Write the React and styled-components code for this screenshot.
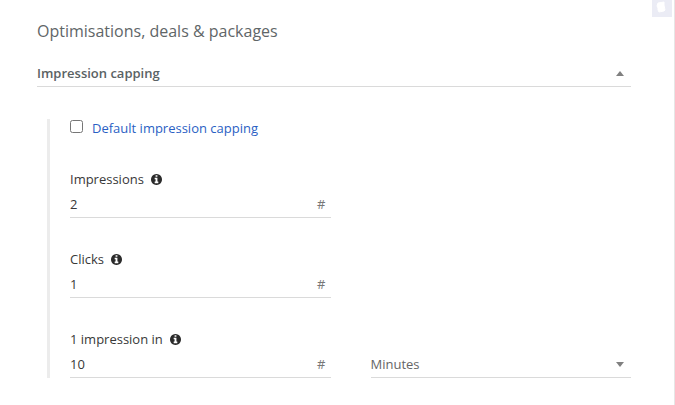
import React, { useState } from "react";
import styled, { createGlobalStyle } from "styled-components";

const GlobalStyle = createGlobalStyle`
  *, *::before, *::after { box-sizing: border-box; }
  body {
    margin: 0;
    background: #fff;
    color: #383838;
    font-family: "Open Sans", sans-serif;
    font-size: 13px;
    line-height: 18px;
  }
  button, input, select { font: inherit; color: inherit; }
`;

const Page = styled.main`
  position: relative;
  min-height: 100vh;
  padding: 19px 43px 27px 37px;
  border-right: 1px solid #e6e6e6;
`;

const PanelToggle = styled.button`
  position: absolute;
  top: 0;
  right: 2px;
  display: flex;
  justify-content: center;
  width: 20px;
  height: 17px;
  padding: 1px 2px 0 0;
  border: 0;
  background: #ebecf5;
`;

const Title = styled.h1`
  margin: 0 0 21px;
  color: #5f6668;
  font-size: 16px;
  font-weight: 400;
  line-height: 24px;
`;

const SectionHeader = styled.button`
  display: flex;
  align-items: center;
  justify-content: space-between;
  width: 100%;
  height: 23px;
  padding: 0 7px 4px 0;
  border: 0;
  border-bottom: 1px solid #dadada;
  background: none;
  color: #5a6264;
  font-weight: 600;
  cursor: pointer;
`;

const SectionBody = styled.div`
  display: grid;
  gap: 32px;
  margin: 32px 0 0 10px;
  padding-left: 20px;
  border-left: 3px solid #ececec;
`;

const CheckRow = styled.div`
  display: flex;
  align-items: flex-start;
  gap: 9px;
  height: 19px;
`;

const Checkbox = styled.input`
  width: 13px;
  height: 13px;
  margin: 1px 0 0;
`;

const CheckLabel = styled.label`
  color: #2a5fc4;
`;

const FieldRow = styled.div`
  display: grid;
  grid-template-columns: 1fr 1fr;
  align-items: end;
  gap: 40px;
`;

const FieldLabel = styled.label`
  display: flex;
  align-items: center;
  gap: 7px;
  padding-bottom: 2px;
`;

const InfoIcon = styled.svg`
  width: 11px;
  height: 11px;
  fill: #2b2b2b;
`;

const Control = styled.div`
  display: flex;
  align-items: center;
  height: 28px;
  border-bottom: 1px solid #dadada;
`;

const NumberInput = styled.input`
  flex: 1;
  min-width: 0;
  height: 27px;
  padding: 0;
  border: 0;
  outline: 0;
  background: none;
`;

const Unit = styled.span`
  padding-right: 5px;
  color: #777;
`;

const Select = styled.select`
  flex: 1;
  height: 27px;
  padding: 0;
  border: 0;
  outline: 0;
  appearance: none;
  background: none;
  color: #666;
`;

const Arrow = styled.svg`
  width: 8px;
  height: 5px;
  flex: none;
  fill: #808080;
  pointer-events: none;
`;

const SelectControl = styled(Control)`
  padding-right: 7px;

  ${Arrow} { margin-top: 2px; }
`;

function NumberField({ id, label, initial }) {
  const [value, setValue] = useState(initial);
  return (
    <div>
      <FieldLabel htmlFor={id}>
        {label}
        <InfoIcon viewBox="128 128 1536 1536" aria-hidden="true">
          <path d="M1152 1376v-160q0-14-9-23t-23-9h-96v-512q0-14-9-23t-23-9h-320q-14 0-23 9t-9 23v160q0 14 9 23t23 9h96v320h-96q-14 0-23 9t-9 23v160q0 14 9 23t23 9h448q14 0 23-9t9-23zm-128-896v-160q0-14-9-23t-23-9h-192q-14 0-23 9t-9 23v160q0 14 9 23t23 9h192q14 0 23-9t9-23zm640 416q0 209-103 385.5t-279.5 279.5-385.5 103-385.5-103-279.5-279.5-103-385.5 103-385.5 279.5-279.5 385.5-103 385.5 103 279.5 279.5 103 385.5z" />
        </InfoIcon>
      </FieldLabel>
      <Control>
        <NumberInput id={id} inputMode="numeric" value={value} onChange={(e) => setValue(e.target.value)} />
        <Unit>#</Unit>
      </Control>
    </div>
  );
}

export default function App() {
  const [open, setOpen] = useState(true);
  return (
    <>
      <GlobalStyle />
      <Page>
        <PanelToggle type="button" aria-label="Notes">
          <svg width="10" height="12" viewBox="0 0 10 12" aria-hidden="true">
            <path d="M2 2 L8 1 L8 4 L9 9 L8 10 L3 11 L2 9 L2 7 L1 5 Z" fill="#fff" stroke="#fff" strokeLinejoin="round" />
          </svg>
        </PanelToggle>
        <Title>Optimisations, deals &amp; packages</Title>
        <SectionHeader type="button" aria-expanded={open} onClick={() => setOpen(!open)}>
          Impression capping
          <Arrow viewBox="0 0 8 5" aria-hidden="true">
            <path d={open ? "M0 5 L4 0 L8 5 Z" : "M0 0 H8 L4 5 Z"} />
          </Arrow>
        </SectionHeader>
        {open && (
          <SectionBody>
            <CheckRow>
              <Checkbox type="checkbox" id="default-capping" />
              <CheckLabel htmlFor="default-capping">Default impression capping</CheckLabel>
            </CheckRow>
            <FieldRow>
              <NumberField id="impressions" label="Impressions" initial="2" />
            </FieldRow>
            <FieldRow>
              <NumberField id="clicks" label="Clicks" initial="1" />
            </FieldRow>
            <FieldRow>
              <NumberField id="period" label="1 impression in" initial="10" />
              <SelectControl>
                <Select aria-label="Time unit" defaultValue="Minutes">
                  <option>Minutes</option>
                  <option>Hours</option>
                  <option>Days</option>
                </Select>
                <Arrow viewBox="0 0 8 5" aria-hidden="true">
                  <path d="M0 0 H8 L4 5 Z" />
                </Arrow>
              </SelectControl>
            </FieldRow>
          </SectionBody>
        )}
      </Page>
    </>
  );
}
